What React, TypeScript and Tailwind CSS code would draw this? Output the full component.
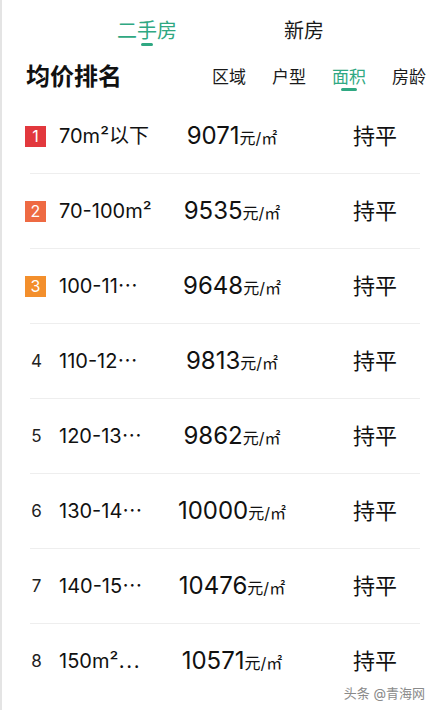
const GREEN = '#2fa882'

const FONT = { fontFamily: 'Inter, "Noto Sans CJK SC", sans-serif' }

const BADGE_COLORS = ['bg-[#e2383d]', 'bg-[#ee6a43]', 'bg-[#f38f2c]']

const ROWS = [
  { range: '70m²以下', price: '9071' },
  { range: '70-100m²', price: '9535' },
  { range: '100-11⋯', price: '9648' },
  { range: '110-12⋯', price: '9813' },
  { range: '120-13⋯', price: '9862' },
  { range: '130-14⋯', price: '10000' },
  { range: '140-15⋯', price: '10476' },
  { range: '150m²⋯', price: '10571' },
]

const FILTERS = ['区域', '户型', '面积', '房龄']

function Rank({ n }: { n: number }) {
  if (n <= 3) {
    return (
      <div className={`w-[21px] h-[21px] flex items-center justify-center text-white text-[16px] leading-none ${BADGE_COLORS[n - 1]}`}>
        {n}
      </div>
    )
  }
  return <div className="w-[21px] pl-[2px] text-center text-[17px] leading-none text-[#222]">{n}</div>
}

export default function App() {
  return (
    <div className="relative w-[434px] h-[710px] bg-white border-l-2 border-[#e4e4e4] overflow-hidden" style={FONT}>
      {/* top tabs */}
      <div className="flex pt-[20px] pl-[115px]">
        <div className="flex flex-col items-center">
          <span className="text-[20px] leading-[22px]" style={{ color: GREEN }}>
            二手房
          </span>
          <div className="w-[12px] h-[3px] mt-[1px] rounded-full" style={{ backgroundColor: GREEN }} />
        </div>
        <span className="ml-[107px] text-[20px] leading-[22px] text-[#1a1a1a]">新房</span>
      </div>

      {/* header */}
      <div className="flex h-[28px] mt-[17px] pl-[24px] pr-[8px]">
        <span className="text-[24px] leading-[28px] font-semibold text-[#111]">均价排名</span>
        <div className="ml-auto flex gap-[26px] pt-[3px]">
          {FILTERS.map((f) => {
            const active = f === '面积'
            return (
              <div key={f} className="flex flex-col items-center">
                <span className="text-[17px] leading-[22px]" style={{ color: active ? GREEN : '#1a1a1a' }}>
                  {f}
                </span>
                <div
                  className="w-[16px] h-[3px] rounded-full"
                  style={{ backgroundColor: active ? GREEN : 'transparent' }}
                />
              </div>
            )
          })}
        </div>
      </div>

      {/* rows */}
      <div className="mt-[8px]">
        {ROWS.map((row, i) => (
          <div key={i} className="flex flex-col">
            <div className="h-[74px] flex items-center pl-[23px] text-[#111]">
              <Rank n={i + 1} />
              <div className="w-[106px] ml-[13px] text-[20px] leading-none whitespace-nowrap">{row.range}</div>
              <div className="w-[134px] flex items-baseline justify-center whitespace-nowrap">
                <span className="text-[24px] leading-none">{row.price}</span>
                <span className="text-[16px] leading-none">元/㎡</span>
              </div>
              <div className="ml-[54px] text-[22px] leading-none">持平</div>
            </div>
            {i < ROWS.length - 1 && <div className="ml-[28px] w-[390px] h-px bg-[#eeeeee]" />}
          </div>
        ))}
      </div>

      {/* watermark */}
      <div className="absolute right-[9px] bottom-[10px] text-[13px] text-[#8a8a8a] leading-none">头条 @青海网</div>
    </div>
  )
}
